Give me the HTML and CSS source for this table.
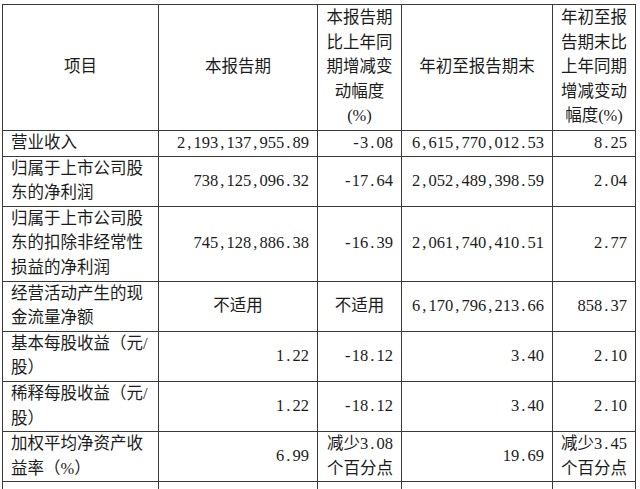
FILE: index.html
```html
<!DOCTYPE html>
<html lang="zh-CN">
<head>
<meta charset="utf-8">
<title>主要财务数据</title>
<link rel="stylesheet" href="styles.css">
</head>
<body>
<div class="page">
<table class="fin">
<colgroup>
<col class="c1"><col class="c2"><col class="c3"><col class="c4"><col class="c5">
</colgroup>
<thead>
<tr class="head">
<th>项目</th>
<th>本报告期</th>
<th>本报告期<br>比上年同<br>期增减变<br>动幅度<br>(%)</th>
<th>年初至报告期末</th>
<th>年初至报<br>告期末比<br>上年同期<br>增减变动<br>幅度(%)</th>
</tr>
</thead>
<tbody>
<tr>
<td class="name">营业收入</td>
<td class="num">2<span class="p">,</span>193<span class="p">,</span>137<span class="p">,</span>955<span class="p">.</span>89</td>
<td class="num"><span class="p">-</span>3<span class="p">.</span>08</td>
<td class="num">6<span class="p">,</span>615<span class="p">,</span>770<span class="p">,</span>012<span class="p">.</span>53</td>
<td class="num">8<span class="p">.</span>25</td>
</tr>
<tr>
<td class="name">归属于上市公司股<br>东的净利润</td>
<td class="num">738<span class="p">,</span>125<span class="p">,</span>096<span class="p">.</span>32</td>
<td class="num"><span class="p">-</span>17<span class="p">.</span>64</td>
<td class="num">2<span class="p">,</span>052<span class="p">,</span>489<span class="p">,</span>398<span class="p">.</span>59</td>
<td class="num">2<span class="p">.</span>04</td>
</tr>
<tr>
<td class="name">归属于上市公司股<br>东的扣除非经常性<br>损益的净利润</td>
<td class="num">745<span class="p">,</span>128<span class="p">,</span>886<span class="p">.</span>38</td>
<td class="num"><span class="p">-</span>16<span class="p">.</span>39</td>
<td class="num">2<span class="p">,</span>061<span class="p">,</span>740<span class="p">,</span>410<span class="p">.</span>51</td>
<td class="num">2<span class="p">.</span>77</td>
</tr>
<tr>
<td class="name">经营活动产生的现<br>金流量净额</td>
<td class="mid">不适用</td>
<td class="mid">不适用</td>
<td class="num">6<span class="p">,</span>170<span class="p">,</span>796<span class="p">,</span>213<span class="p">.</span>66</td>
<td class="num">858<span class="p">.</span>37</td>
</tr>
<tr>
<td class="name">基本每股收益（元/<br>股）</td>
<td class="num">1<span class="p">.</span>22</td>
<td class="num"><span class="p">-</span>18<span class="p">.</span>12</td>
<td class="num">3<span class="p">.</span>40</td>
<td class="num">2<span class="p">.</span>10</td>
</tr>
<tr>
<td class="name">稀释每股收益（元/<br>股）</td>
<td class="num">1<span class="p">.</span>22</td>
<td class="num"><span class="p">-</span>18<span class="p">.</span>12</td>
<td class="num">3<span class="p">.</span>40</td>
<td class="num">2<span class="p">.</span>10</td>
</tr>
<tr>
<td class="name">加权平均净资产收<br>益率（%）</td>
<td class="num">6<span class="p">.</span>99</td>
<td class="num">减少3<span class="p">.</span>08<br>个百分点</td>
<td class="num">19<span class="p">.</span>69</td>
<td class="num">减少3<span class="p">.</span>45<br>个百分点</td>
</tr>
<tr class="more">
<td class="name">&nbsp;</td>
<td></td>
<td></td>
<td></td>
<td></td>
</tr>
</tbody>
</table>
</div>
</body>
</html>
```

FILE: styles.css
```css
html, body {
  margin: 0;
  padding: 0;
  background: #ffffff;
}

.page {
  padding: 4px 0 0 2px;
  height: 489px;
  overflow: hidden;
  box-sizing: border-box;
}

.fin {
  border-collapse: collapse;
  table-layout: fixed;
  width: 633px;
  font-family: "Liberation Serif", "Noto Sans CJK SC", serif;
  font-size: 16.5px;
  line-height: 24.6px;
  color: #1c1c1c;
}

.c1 { width: 156px; }
.c2 { width: 159px; }
.c3 { width: 84px; }
.c4 { width: 151px; }
.c5 { width: 83px; }

.fin th,
.fin td {
  border: 1px solid #3a3a3a;
  padding: 0 8px;
  vertical-align: middle;
  font-weight: 400;
}

.fin th {
  text-align: center;
  padding: 1px 4px;
}

.fin .name {
  text-align: left;
}

.fin .num {
  text-align: right;
  white-space: nowrap;
}

.fin .mid {
  text-align: center;
}

.p {
  display: inline-block;
  width: 0.5em;
  text-align: center;
}

.more td {
  height: 25px;
}
```
